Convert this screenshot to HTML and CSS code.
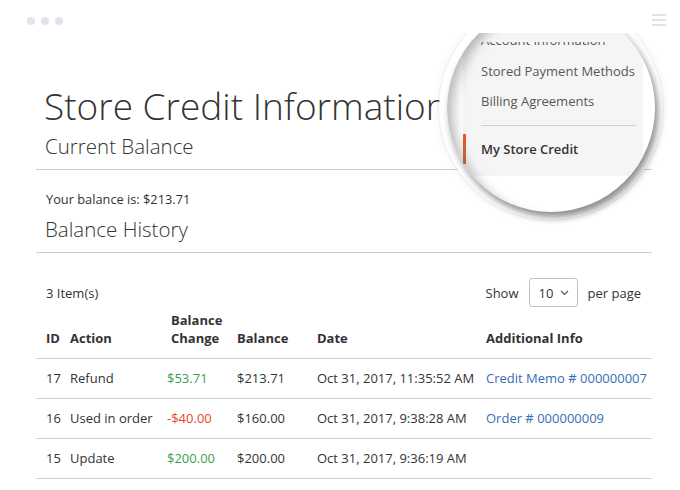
FILE: index.html
```html
<!DOCTYPE html>
<html lang="en">
<head>
<meta charset="utf-8">
<title>Store Credit Information</title>
<link rel="stylesheet" href="styles.css">
</head>
<body>
<div class="topbar">
  <div class="dots"><span></span><span></span><span></span></div>
  <svg class="burger" width="14" height="12" viewBox="0 0 14 12"><rect x="0" y="0" width="14" height="2"/><rect x="0" y="5" width="14" height="2"/><rect x="0" y="10" width="14" height="2"/></svg>
</div>

<div class="lens-ring">
  <div class="lens">
    <div class="nav">
      <div class="nav-clip"><div class="nav-clip-inner">Account Information</div></div>
      <div class="nav-item first">Stored Payment Methods</div>
      <div class="nav-item">Billing Agreements</div>
      <div class="nav-divider"></div>
      <div class="nav-item current">My Store Credit</div>
    </div>
  </div>
</div>

<main class="page">
  <h1 class="page-title">Store Credit Information</h1>
  <h2 class="block-title first-block">Current Balance</h2>
  <p class="balance">Your balance is: $213.71</p>
  <h2 class="block-title">Balance History</h2>

  <div class="toolbar">
    <span class="amount">3 Item(s)</span>
    <div class="limiter">
      <span>Show</span>
      <div class="select"><span>10</span><svg width="9" height="6" viewBox="0 0 9 6"><path d="M1 1l3.5 3.5L8 1" fill="none" stroke="#555" stroke-width="1.2"/></svg></div>
      <span>per page</span>
    </div>
  </div>

  <table class="history">
    <colgroup>
      <col class="c-id"><col class="c-action"><col class="c-change"><col class="c-balance"><col class="c-date"><col class="c-info">
    </colgroup>
    <thead>
      <tr><th>ID</th><th>Action</th><th class="th-change">Balance Change</th><th>Balance</th><th>Date</th><th>Additional Info</th></tr>
    </thead>
    <tbody>
      <tr><td>17</td><td>Refund</td><td class="plus">$53.71</td><td>$213.71</td><td>Oct 31, 2017, 11:35:52 AM</td><td><a href="#">Credit Memo # 000000007</a></td></tr>
      <tr><td>16</td><td>Used in order</td><td class="minus">-$40.00</td><td>$160.00</td><td>Oct 31, 2017, 9:38:28 AM</td><td><a href="#">Order # 000000009</a></td></tr>
      <tr><td>15</td><td>Update</td><td class="plus">$200.00</td><td>$200.00</td><td>Oct 31, 2017, 9:36:19 AM</td><td></td></tr>
    </tbody>
  </table>
</main>
</body>
</html>
```

FILE: styles.css
```css
html, body {
  margin: 0;
  padding: 0;
  background: #fff;
}
body {
  font-family: "Open Sans", "Noto Sans", sans-serif;
  color: #333;
  font-size: 13px;
  line-height: 18px;
  width: 680px;
  height: 490px;
  overflow: hidden;
  position: relative;
}

/* top bar */
.topbar {
  position: relative;
  z-index: 3;
  height: 33px;
  background: #fff;
  display: flex;
  justify-content: space-between;
  align-items: flex-start;
  padding: 0 14px 0 27px;
}
.dots {
  display: flex;
  gap: 6px;
  margin-top: 17px;
}
.dots span {
  width: 8px;
  height: 8px;
  border-radius: 50%;
  background: #dfe5ee;
}
.burger {
  margin-top: 14px;
  fill: #dde3ec;
}

/* magnifier lens */
.lens-ring {
  position: absolute;
  z-index: 2;
  left: 439px;
  top: -4px;
  width: 224px;
  height: 224px;
  border-radius: 50%;
  background: #fff;
  box-shadow: 0 0 0 1px rgba(0,0,0,0.04), 0 0 8px rgba(0,0,0,0.07);
  display: flex;
  align-items: center;
  justify-content: center;
}
.lens {
  position: relative;
  width: 208px;
  height: 208px;
  border-radius: 50%;
  background: #fff;
  overflow: hidden;
  box-shadow: 3px 5px 7px rgba(0,0,0,0.45);
}
.lens::after {
  content: "";
  position: absolute;
  inset: 0;
  border-radius: 50%;
  box-shadow: inset 12px 4px 12px -6px rgba(0,0,0,0.28);
  pointer-events: none;
}
.nav {
  margin-left: 16px;
  width: 180px;
  height: 172px;
  background: #f5f5f5;
  font-size: 13px;
  color: #575757;
  overflow: hidden;
}
.nav-clip {
  margin-top: 38px;
  height: 4px;
  overflow: hidden;
  padding-left: 18px;
}
.nav-clip-inner {
  margin-top: -17px;
  line-height: 30px;
  white-space: nowrap;
}
.nav-item {
  line-height: 30px;
  padding-left: 18px;
  white-space: nowrap;
}
.nav-item.first {
  margin-top: 10px;
}
.nav-divider {
  margin: 9px 7px 0 18px;
  height: 1px;
  background: #d0d0d0;
}
.nav-item.current {
  margin-top: 8px;
  padding-left: 15px;
  border-left: 3px solid #ee5a22;
  border-image: linear-gradient(#f4561c, #c07a47) 1;
  font-weight: 600;
  color: #333;
}

/* page */
.page {
  padding: 0 28px 0 36px;
}
.page-title {
  margin: 51px 0 0 8px;
  font-size: 37px;
  line-height: 44px;
  font-weight: 300;
  white-space: nowrap;
}
.block-title {
  margin: 7px 0 0;
  padding: 0 0 9px 9px;
  font-size: 20.5px;
  line-height: 28px;
  font-weight: 300;
  border-bottom: 1px solid #cccccc;
}
.block-title.first-block {
  margin-top: 4px;
}
.balance {
  margin: 20px 0 0 10px;
  font-size: 12.8px;
}

.toolbar {
  margin-top: 25px;
  height: 29px;
  display: flex;
  align-items: center;
  justify-content: space-between;
  padding: 0 11px 0 10px;
}
.limiter {
  display: flex;
  align-items: center;
  gap: 10px;
  color: #333;
}
.select {
  width: 49px;
  height: 29px;
  box-sizing: border-box;
  border: 1px solid #c2c2c2;
  border-radius: 3px;
  display: flex;
  align-items: center;
  gap: 7px;
  padding-left: 9px;
}

.history {
  width: 616px;
  border-collapse: collapse;
  table-layout: fixed;
}
.c-id { width: 24px; }
.c-action { width: 97px; }
.c-change { width: 70px; }
.c-balance { width: 80px; }
.c-date { width: 169px; }
.c-info { width: 176px; }
.history th {
  text-align: left;
  font-weight: 700;
  vertical-align: bottom;
  padding: 4px 0 11px 10px;
  border-bottom: 1px solid #d1d1d1;
}
.history th.th-change {
  padding-left: 14px;
}
.history td {
  padding: 10px 0 11px 10px;
  border-bottom: 1px solid #d1d1d1;
  white-space: nowrap;
}
.plus { color: #3f9c4f; }
.minus { color: #e8462c; }
.history a {
  color: #3a6db2;
  text-decoration: none;
}
```
